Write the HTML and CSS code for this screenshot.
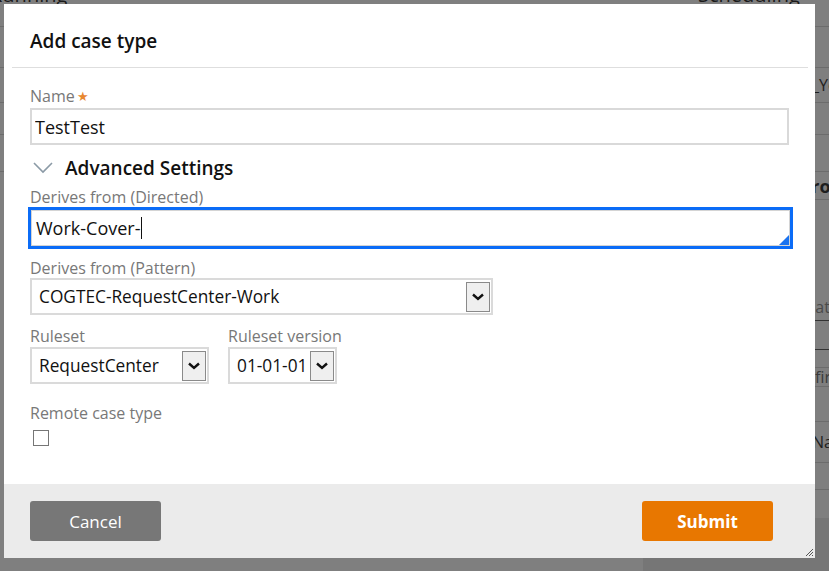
FILE: index.html
```html
<!DOCTYPE html>
<html lang="en">
<head>
  <meta charset="UTF-8" />
  <title>Add case type</title>
  <link rel="stylesheet" href="styles.css">
</head>
<body>
<div class="page">
  <div class="page-left">
    <div class="bg-title"><span>Running</span></div>
    <div class="bg-row h41"></div>
    <div class="bg-row h35"></div>
    <div class="bg-row h32"></div>
    <div class="bg-row h37"></div>
  </div>
  <div class="page-right">
    <div class="bg-title"><span>Scheduling</span></div>
    <div class="bg-row h41"></div>
    <div class="bg-row h35"><span class="bg-text">_Year</span></div>
    <div class="bg-row h32"></div>
    <div class="bg-row h37"></div>
    <div class="bg-row h28"><span class="bg-text bold">Process</span></div>
    <div class="bg-row h168">
      <span class="bg-text small">Update</span>
      <span class="bg-select"></span>
    </div>
    <div class="bg-row h19"><span class="bg-text fi">Notify first</span></div>
    <div class="bg-row h35"></div>
    <div class="bg-row h41"><span class="bg-text">Name</span></div>
    <div class="bg-row h27"></div>
    <div class="bg-gap"></div>
    <div class="bg-dark"></div>
  </div>
</div>

<div class="overlay">
  <div class="modal">
    <div class="modal-header">Add case type</div>

    <div class="modal-body">
      <label class="field-label" for="caseName">Name<span class="req">&#9733;</span></label>
      <input type="text" id="caseName" class="field" value="TestTest">

      <div class="advanced">
        <svg class="adv-chevron" width="20" height="12" viewBox="0 0 20 12">
          <path d="M1 1 L10 10 L19 1" fill="none" stroke="#8b9aa6" stroke-width="1.6"/>
        </svg>
        <span>Advanced Settings</span>
      </div>

      <label class="field-label tight" for="directed">Derives from (Directed)</label>
      <div class="focus-ring">
        <div class="field text-area" id="directed">Work-Cover-<span class="caret"></span></div>
        <span class="grip"></span>
      </div>

      <label class="field-label spaced" for="pattern">Derives from (Pattern)</label>
      <div class="select pattern" id="pattern">
        <span>COGTEC-RequestCenter-Work</span>
        <span class="drop"><svg width="12" height="8" viewBox="0 0 12 8"><path d="M1 1.5 L6 6 L11 1.5" fill="none" stroke="#111" stroke-width="2.4"/></svg></span>
      </div>

      <div class="row">
        <div class="col">
          <label class="field-label">Ruleset</label>
          <div class="select ruleset">
            <span>RequestCenter</span>
            <span class="drop"><svg width="12" height="8" viewBox="0 0 12 8"><path d="M1 1.5 L6 6 L11 1.5" fill="none" stroke="#111" stroke-width="2.4"/></svg></span>
          </div>
        </div>
        <div class="col">
          <label class="field-label">Ruleset version</label>
          <div class="select version">
            <span>01-01-01</span>
            <span class="drop"><svg width="12" height="8" viewBox="0 0 12 8"><path d="M1 1.5 L6 6 L11 1.5" fill="none" stroke="#111" stroke-width="2.4"/></svg></span>
          </div>
        </div>
      </div>

      <label class="field-label spaced-lg">Remote case type</label>
      <span class="checkbox"></span>
    </div>

    <div class="modal-footer">
      <button class="btn cancel">Cancel</button>
      <button class="btn submit">Submit</button>
    </div>
    <svg class="modal-grip" width="10" height="10" viewBox="0 0 10 10">
      <path d="M9 2 L2 9 M9 5 L5 9 M9 8 L8 9" stroke="#555" stroke-width="1"/>
    </svg>
  </div>
</div>
</body>
</html>
```

FILE: styles.css
```css
body {
  margin: 0;
  background-color: #7f7f7f;
  font-family: "Open Sans", "Liberation Sans", sans-serif;
  overflow: hidden;
}

.page {
  display: flex;
  justify-content: space-between;
  height: 571px;
}

.page-left {
  width: 140px;
  margin-left: -20px;
}

.page-right {
  width: 186px;
  display: flex;
  flex-direction: column;
}

.bg-title {
  box-sizing: border-box;
  font-size: 20px;
  color: #1a1a1a;
  line-height: 20px;
  height: 27px;
  border-bottom: 1px solid #6c6c6c;
  overflow: hidden;
  flex-shrink: 0;
}

.bg-title span {
  display: block;
  margin-top: -15px;
}

.page-left .bg-title {
  padding-left: 10px;
}

.page-right .bg-title {
  padding-left: 55px;
}

.bg-row {
  box-sizing: border-box;
  border-bottom: 1px solid #6c6c6c;
  display: flex;
  flex-direction: column;
  justify-content: center;
  white-space: nowrap;
  flex-shrink: 0;
}

.h19 { height: 19px; }
.h27 { height: 27px; }
.h28 { height: 28px; }
.h32 { height: 32px; }
.h35 { height: 35px; }
.h37 { height: 37px; }
.h41 { height: 41px; }

.h168 {
  height: 168px;
  justify-content: flex-end;
  padding-bottom: 17px;
}

.bg-text {
  font-size: 16px;
  color: #1e1e1e;
  padding-left: 169px;
}

.bg-text.bold {
  font-weight: bold;
  font-size: 18px;
  padding-left: 157px;
}

.bg-text.small {
  color: #4a4a4a;
  padding-left: 141px;
}

.bg-text.fi {
  color: #3a3a3a;
  padding-left: 123px;
}

.bg-select {
  box-sizing: border-box;
  width: 40px;
  height: 30px;
  margin: 2px 0 0 158px;
  border: 1px solid #333;
}

.bg-gap {
  height: 28px;
  flex-shrink: 0;
}

.bg-dark {
  flex: 1;
  background: #767676;
}

.overlay {
  position: fixed;
  inset: 0;
}

.modal {
  position: absolute;
  left: 4px;
  top: 4px;
  width: 811px;
  height: 554px;
  background: white;
  display: flex;
  flex-direction: column;
}

.modal-header {
  font-size: 19px;
  font-weight: 600;
  color: #111;
  line-height: 26px;
  padding: 24px 0 0 18px;
  height: 39px;
  margin: 0 7px 0 8px;
  border-bottom: 1px solid #dedede;
}

.modal-body {
  flex: 1;
  padding: 18px 26px 0 26px;
  display: flex;
  flex-direction: column;
  align-items: flex-start;
}

.field-label {
  display: block;
  font-size: 16px;
  line-height: 20px;
  color: #787878;
  margin-bottom: 1px;
}

.field-label.tight {
  margin-bottom: 0;
}

.field-label.spaced {
  margin-top: 9px;
  margin-bottom: 0;
}

.field-label.spaced-lg {
  margin-top: 19px;
}

.req {
  color: #e8872f;
  font-size: 13px;
  margin-left: 2px;
  position: relative;
  top: -1px;
}

.field {
  box-sizing: border-box;
  width: 759px;
  height: 37px;
  border: 2px solid #d9d9d9;
  padding: 0 4px 0 3px;
  font-family: "Open Sans", "Liberation Sans", sans-serif;
  font-size: 18px;
  color: #111;
  outline: none;
  margin: 0;
}

.advanced {
  display: flex;
  align-items: center;
  height: 30px;
  margin-top: 8px;
  margin-bottom: 4px;
  font-size: 19px;
  font-weight: 600;
  color: #111;
}

.adv-chevron {
  margin-left: 3px;
  margin-right: 12px;
}

.focus-ring {
  position: relative;
  border: 3px solid #0b6cf7;
  margin-left: -2px;
}

.text-area {
  display: flex;
  align-items: center;
  width: 759px;
  height: 36px;
  border: 1px solid #d4d4d4;
  padding-left: 4px;
}

.caret {
  display: inline-block;
  width: 1px;
  height: 22px;
  background: #111;
  margin-left: 1px;
}

.grip {
  position: absolute;
  right: 1px;
  bottom: 1px;
  width: 0;
  height: 0;
  border-left: 10px solid transparent;
  border-bottom: 10px solid #1a73f0;
}

.select {
  box-sizing: border-box;
  display: flex;
  align-items: center;
  justify-content: space-between;
  height: 37px;
  border: 2px solid #dadada;
  padding: 0 1px 0 7px;
  font-size: 17.3px;
  color: #111;
  white-space: nowrap;
  overflow: hidden;
}

.select.pattern {
  width: 463px;
}

.select.ruleset {
  width: 179px;
}

.select.version {
  width: 109px;
  padding-left: 7px;
}

.drop {
  box-sizing: border-box;
  display: flex;
  align-items: center;
  justify-content: center;
  flex-shrink: 0;
  width: 24px;
  height: 30px;
  background: #efefef;
  border: 1px solid #8a8a8a;
}

.row {
  display: flex;
  gap: 19px;
  margin-top: 11px;
}

.checkbox {
  box-sizing: border-box;
  width: 16px;
  height: 16px;
  border: 1px solid #767676;
  margin: 6px 0 0 3px;
  background: white;
}

.modal-footer {
  height: 74px;
  background: #ebebeb;
  display: flex;
  justify-content: space-between;
  align-items: flex-start;
  padding: 17px 42px 0 26px;
  box-sizing: border-box;
}

.btn {
  height: 40px;
  width: 131px;
  border: none;
  border-radius: 3px;
  color: white;
  font-family: "Open Sans", "Liberation Sans", sans-serif;
  font-size: 17px;
  cursor: pointer;
}

.btn.cancel {
  background: #777777;
}

.btn.submit {
  background: #e87700;
  font-weight: bold;
}

.modal-grip {
  position: absolute;
  right: 1px;
  bottom: 1px;
}
```
